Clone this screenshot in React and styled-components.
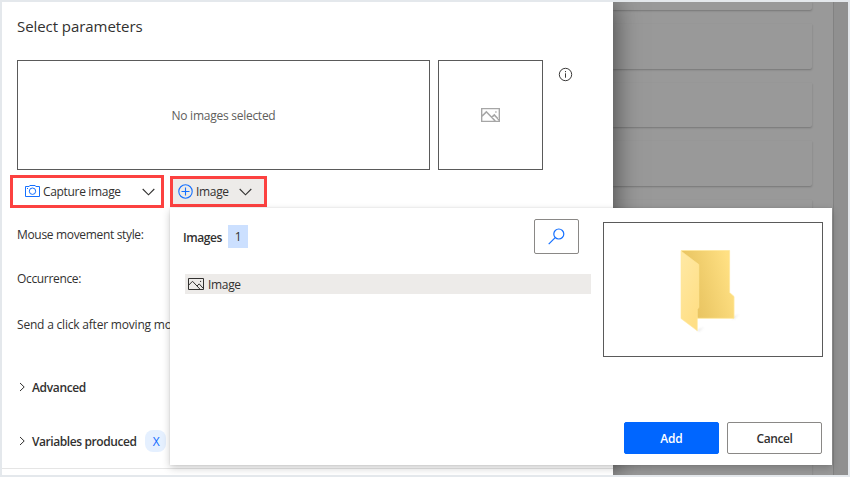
import React from "react";
import styled, { createGlobalStyle } from "styled-components";

const GlobalStyle = createGlobalStyle`
  * { box-sizing: border-box; }
  body { margin: 0; background: #e4e8ec; }
  button { font: inherit; color: inherit; background: none; border: 0; padding: 0; margin: 0; }
  svg { display: block; flex: none; }
`;

const Frame = styled.div`
  position: relative;
  width: 850px;
  height: 477px;
  border: 2px solid #e4e8ec;
  display: flex;
  overflow: hidden;
  color: #323130;
  font-family: "Open Sans", "Noto Sans", sans-serif;
  font-size: 12px;
  line-height: 16px;
`;

const Dialog = styled.section`
  width: 611px;
  height: 473px;
  background: #fff;
  display: flex;
  flex-direction: column;
  box-shadow: 0 0 26px rgba(0, 0, 0, 0.6);
  z-index: 1;
`;

const Text = styled.span`
  display: block;
  white-space: nowrap;
  padding-top: ${(p) => p.$drop || 0}px;
  font-weight: ${(p) => (p.$bold ? 600 : 400)};
  letter-spacing: ${(p) => p.$track ?? (p.$bold ? -0.42 : -0.33)}px;
  color: ${(p) => p.$color || "inherit"};
`;

const Title = styled.h1`
  margin: 0;
  padding: 13px 15px 0;
  height: 58px;
  font-size: 15px;
  line-height: 22px;
  font-weight: 400;
  letter-spacing: -0.06px;
`;

const PreviewRow = styled.div`
  display: flex;
  gap: 8px;
  padding-left: 15px;
  height: 110px;
`;

const PreviewBox = styled.div`
  width: ${(p) => p.$width}px;
  height: 100%;
  border: 1px solid #5a5a5a;
  display: flex;
  align-items: center;
  justify-content: center;
`;

const InfoSlot = styled.div`
  padding: 7px 0 0 7px;
`;

const ActionRow = styled.div`
  display: flex;
  align-items: center;
  gap: 6px;
  padding-left: 8px;
  margin-top: 5px;
  height: 33px;
`;

const ActionButton = styled.button`
  width: ${(p) => p.$width}px;
  height: ${(p) => p.$height}px;
  border: 3px solid #fc4140;
  background: ${(p) => (p.$pressed ? "#edebe9" : "#fff")};
  display: flex;
  align-items: center;
  gap: ${(p) => p.$gap}px;
  padding: 0 ${(p) => p.$right}px 0 ${(p) => p.$left}px;
  & > :last-child { margin-left: auto; }
`;

const FieldLabel = styled.div`
  padding-left: 15px;
  height: 16px;
  margin-top: ${(p) => p.$top}px;
`;

const Expander = styled.div`
  display: flex;
  align-items: center;
  height: 22px;
  margin-top: ${(p) => p.$top}px;
  padding-left: 17px;
  gap: 6px;
`;

const VariableTag = styled.span`
  width: 21px;
  height: 22px;
  margin-left: 3px;
  border-radius: 8px;
  background: #e5f0ff;
  color: #0f6bff;
  display: flex;
  align-items: center;
  justify-content: center;
`;

const Footer = styled.div`
  margin-top: 16px;
  border-top: 1px solid #e5e5e5;
  flex: 1;
`;

const Backdrop = styled.div`
  flex: 1;
  height: 473px;
  background: #999;
  display: flex;
  justify-content: space-between;
`;

const CardStack = styled.div`
  width: 199px;
  display: flex;
  flex-direction: column;
  gap: 14px;
`;

const Card = styled.div`
  height: ${(p) => p.$height}px;
  flex: none;
  border-radius: 0 0 2px 0;
  background: #999;
  box-shadow: 0 1px 2px rgba(0, 0, 0, 0.23);
`;

const SideStrip = styled.div`
  width: 15px;
  background: #909090;
  border-left: 1px solid #828282;
`;

const Popup = styled.div`
  position: absolute;
  z-index: 2;
  left: 168px;
  top: 206px;
  width: 662px;
  height: 257px;
  background: #fff;
  box-shadow: 0 3px 8px rgba(0, 0, 0, 0.2), 0 0 2px rgba(0, 0, 0, 0.1);
  display: flex;
  flex-direction: column;
  justify-content: space-between;
  padding: 11px 9px 11px 13px;
`;

const PopupBody = styled.div`
  display: flex;
  justify-content: space-between;
`;

const ImageList = styled.div`
  width: 408px;
`;

const ListHeader = styled.div`
  display: flex;
  align-items: center;
  height: 35px;
  padding-right: 12px;
`;

const Count = styled.span`
  width: 20px;
  height: 23px;
  margin-left: 6px;
  background: #cce0ff;
  display: flex;
  align-items: center;
  justify-content: center;
`;

const SearchButton = styled.button`
  width: 45px;
  height: 35px;
  margin-left: auto;
  border: 1px solid #8a8886;
  border-radius: 2px;
  display: flex;
  align-items: center;
  justify-content: center;
`;

const ListItem = styled.div`
  margin: 20px 0 0 2px;
  padding-left: 3px;
  height: 20px;
  background: #edebe9;
  display: flex;
  align-items: center;
  gap: 4px;
`;

const Thumbnail = styled.div`
  width: 220px;
  height: 135px;
  margin-top: 3px;
  border: 1px solid #5a5a5a;
  padding: 27px 0 0 76px;
`;

const PopupActions = styled.div`
  display: flex;
  justify-content: flex-end;
  gap: 8px;
  padding-right: 1px;
`;

const CommandButton = styled.button`
  width: 95px;
  height: 32px;
  border: 1px solid ${(p) => (p.$primary ? "#0066ff" : "#8a8886")};
  border-radius: 2px;
  background: ${(p) => (p.$primary ? "#0066ff" : "#fff")};
  color: ${(p) => (p.$primary ? "#fff" : "#323130")};
  display: flex;
  align-items: center;
  justify-content: center;
`;

const Chevron = () => (
  <svg width="13" height="8" viewBox="0 0 13 8" fill="none" stroke="#323130" strokeWidth="1.1">
    <path d="M.7 1 6.5 6.8 12.3 1" />
  </svg>
);

const ChevronRight = () => (
  <svg width="7" height="10" viewBox="0 0 7 10" fill="none" stroke="#323130">
    <path d="M1 1 5.2 5 1 9" />
  </svg>
);

const Camera = () => (
  <svg width="15" height="13" viewBox="0 0 15 13" fill="none" stroke="#1570ff">
    <path d="M4.2 1.5 4.8.5h5.4l.6 1h3.7v10H.5v-10h3.7M2 3.5h1" />
    <circle cx="7.5" cy="6.2" r="3.2" />
  </svg>
);

const AddCircle = () => (
  <svg width="15" height="15" viewBox="0 0 15 15" fill="none" stroke="#1570ff" strokeWidth="1.1">
    <circle cx="7.5" cy="7.5" r="6.7" />
    <path d="M7.5 3.5v8M3.5 7.5h8" />
  </svg>
);

const Picture = ({ width, height, color, weight }) => (
  <svg width={width} height={height} viewBox="0 0 16 12" preserveAspectRatio="none" fill="none" stroke={color} strokeWidth={weight}>
    <path d="M.5.5h15v11H.5zM.8 7 4.5 3.3 12 11.2M9 8l2.2-2.1 4 4.4" />
    <path d="M12 3.4h1.1" />
  </svg>
);

const Info = () => (
  <svg width="15" height="15" viewBox="0 0 15 15" fill="none" stroke="#3b3a39">
    <circle cx="7.5" cy="7.5" r="6.2" />
    <path d="M7.5 6.3v4.4M7.5 4v1.2" />
  </svg>
);

const Search = () => (
  <svg width="17" height="17" viewBox="0 0 17 17" fill="none" stroke="#1570ff" strokeWidth="1.2">
    <circle cx="10.8" cy="6" r="5" />
    <path d="M7.2 9.6.7 16.2" />
  </svg>
);

const Folder = () => (
  <svg width="60" height="84" viewBox="0 0 60 84">
    <defs>
      <linearGradient id="folderBack" x1="0" y1=".8" x2="1" y2=".45">
        <stop offset="0" stopColor="#e4bd59" />
        <stop offset=".4" stopColor="#edca68" />
        <stop offset="1" stopColor="#ffe083" />
      </linearGradient>
      <linearGradient id="folderFront" x1="0" y1="0" x2=".5" y2="1">
        <stop offset="0" stopColor="#ffe9a5" />
        <stop offset="1" stopColor="#ffdf86" />
      </linearGradient>
      <filter id="folderShade" x="-50%" y="-100%" width="200%" height="300%">
        <feGaussianBlur stdDeviation="1" />
      </filter>
    </defs>
    <path d="M52 68.5 59 64l-5 4.5zM17 81l7-4-5 4z" fill="#aaa" opacity=".6" filter="url(#folderShade)" />
    <path d="M1.3.5h48.3v42l4.4 4v21.8H17z" fill="url(#folderBack)" stroke="#ffe79a" strokeWidth=".8" />
    <path d="M1 1 18.8 14.5v42.8l-1.5 2.2v21.3L1 68.5z" fill="url(#folderFront)" stroke="#ffe79a" strokeWidth=".6" />
  </svg>
);

export default function App() {
  return (
    <>
      <GlobalStyle />
      <Frame>
        <Dialog>
          <Title>Select parameters</Title>
          <PreviewRow>
            <PreviewBox $width={413}>
              <Text $color="#605e5c" $track={-0.26} $drop={2}>No images selected</Text>
            </PreviewBox>
            <PreviewBox $width={105}>
              <Picture width={19} height={14} color="#a6a6a6" weight={1.3} />
            </PreviewBox>
            <InfoSlot><Info /></InfoSlot>
          </PreviewRow>
          <ActionRow>
            <ActionButton $width={154} $height={33} $left={12} $right={6} $gap={3}>
              <Camera />
              <Text $drop={1}>Capture image</Text>
              <Chevron />
            </ActionButton>
            <ActionButton $width={97} $height={31} $left={5} $right={12} $gap={3}  $pressed>
              <AddCircle />
              <Text $drop={1}>Image</Text>
              <Chevron />
            </ActionButton>
          </ActionRow>
          <FieldLabel $top={19}><Text>Mouse movement style:</Text></FieldLabel>
          <FieldLabel $top={28}><Text>Occurrence:</Text></FieldLabel>
          <FieldLabel $top={30}><Text $track={-0.2}>Send a click after moving mouse:</Text></FieldLabel>
          <Expander $top={43}>
            <ChevronRight />
            <Text $bold $track={-0.35} $drop={2}>Advanced</Text>
          </Expander>
          <Expander $top={32}>
            <ChevronRight />
            <Text $bold $drop={2}>Variables produced</Text>
            <VariableTag><Text $drop={2}>X</Text></VariableTag>
          </Expander>
          <Footer />
        </Dialog>
        <Backdrop>
          <CardStack>
            <Card $height={8} />
            <Card $height={45} />
            <Card $height={44} />
            <Card $height={45} />
            <Card $height={44} />
            <Card $height={45} />
            <Card $height={44} />
            <Card $height={45} />
            <Card $height={44} />
          </CardStack>
          <SideStrip />
        </Backdrop>
        <Popup>
          <PopupBody>
            <ImageList>
              <ListHeader>
                <Text $bold $drop={3}>Images</Text>
                <Count><Text $drop={1}>1</Text></Count>
                <SearchButton aria-label="Search"><Search /></SearchButton>
              </ListHeader>
              <ListItem>
                <Picture width={16} height={12} color="#323130" weight={1} />
                <Text $drop={2}>Image</Text>
              </ListItem>
            </ImageList>
            <Thumbnail><Folder /></Thumbnail>
          </PopupBody>
          <PopupActions>
            <CommandButton $primary><Text $bold $track={-0.2} $drop={2}>Add</Text></CommandButton>
            <CommandButton><Text $bold $drop={2}>Cancel</Text></CommandButton>
          </PopupActions>
        </Popup>
      </Frame>
    </>
  );
}
